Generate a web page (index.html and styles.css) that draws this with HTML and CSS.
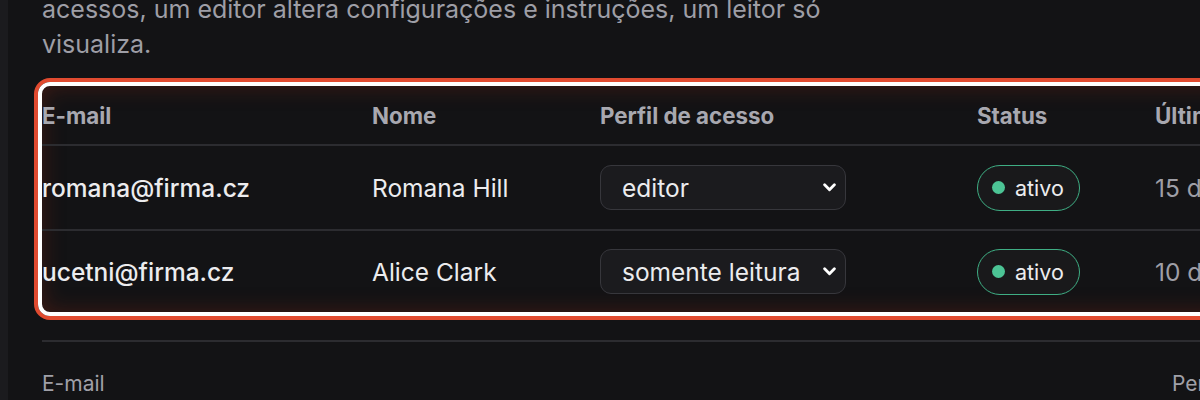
FILE: index.html
```html
<!DOCTYPE html>
<html lang="pt">
<head>
<meta charset="utf-8">
<link rel="stylesheet" href="styles.css">
</head>
<body>
<div class="layout">
  <aside class="rail"></aside>
  <main class="main">
    <p class="intro">acessos, um editor altera configurações e instruções, um leitor só visualiza.</p>
    <div class="highlight">
      <div class="table">
        <div class="row head">
          <div>E-mail</div><div>Nome</div><div>Perfil de acesso</div><div>Status</div><div>Último acesso</div>
        </div>
        <div class="row">
          <div class="email">romana@firma.cz</div>
          <div>Romana Hill</div>
          <div><div class="select"><span>editor</span><svg class="chev" viewBox="0 0 12 8"><path d="M1.5 1.5 6 6l4.5-4.5" fill="none" stroke="currentColor" stroke-width="2.6" stroke-linecap="round" stroke-linejoin="round"/></svg></div></div>
          <div><span class="badge"><span class="dot"></span>ativo</span></div>
          <div class="muted">15 dias atrás</div>
        </div>
        <div class="row">
          <div class="email">ucetni@firma.cz</div>
          <div>Alice Clark</div>
          <div><div class="select"><span>somente leitura</span><svg class="chev" viewBox="0 0 12 8"><path d="M1.5 1.5 6 6l4.5-4.5" fill="none" stroke="currentColor" stroke-width="2.6" stroke-linecap="round" stroke-linejoin="round"/></svg></div></div>
          <div><span class="badge"><span class="dot"></span>ativo</span></div>
          <div class="muted">10 dias atrás</div>
        </div>
      </div>
    </div>
    <div class="second">
      <div class="second-head"><div>E-mail</div><div>Perfil</div></div>
    </div>
  </main>
</div>
</body>
</html>
```

FILE: styles.css
```css
* { box-sizing: border-box; }
html, body { margin: 0; padding: 0; }
body {
  background: #131315;
  font-family: Inter, "Noto Sans", sans-serif;
  color: #ececee;
  overflow: hidden;
  width: 1200px;
  height: 400px;
}
.layout { display: flex; height: 400px; }
.rail { width: 8px; flex: none; background: #1b1b1e; }
.main { flex: none; width: 1320px; padding-left: 26px; }
.intro {
  margin: -8px 0 0 8px;
  width: 840px;
  font-size: 25px;
  line-height: 35px;
  color: #9e9ea6;
}
.highlight {
  margin-top: 16px;
  border: 4px solid #e14b30;
  border-radius: 16px;
}
.table {
  border: 4px solid #ffffff;
  border-radius: 12px;
  box-shadow: inset 0 0 22px rgba(150, 40, 20, 0.35);
  overflow: hidden;
}
.row {
  display: grid;
  grid-template-columns: 330px 228px 377px 178px 1fr;
  align-items: center;
  height: 85px;
  border-top: 2px solid #2c2c30;
  font-size: 24.5px;
}
.row.head {
  height: 58px;
  border-top: none;
  font-size: 22.3px;
  font-weight: 700;
  color: #a8a8b0;
}
.row:last-child { height: 83px; }
.email { font-weight: 500; }
.muted { color: #9e9ea6; }
.select {
  width: 246px;
  height: 45px;
  border: 1.5px solid #37373c;
  border-radius: 11px;
  background: #1b1b1e;
  display: flex;
  align-items: center;
  justify-content: space-between;
  padding: 0 9px 0 21px;
  color: #ececee;
}
.chev { width: 13px; height: 9px; color: #ffffff; }
.badge {
  display: inline-flex;
  align-items: center;
  gap: 10px;
  height: 46px;
  padding: 0 15px 0 14px;
  border: 1.5px solid #3fae84;
  border-radius: 23px;
  background: #19191b;
  font-size: 21.5px;
}
.dot { width: 13px; height: 13px; border-radius: 50%; background: #4cc495; }
.second {
  margin: 20px 0 0 8px;
  border-top: 2px solid #2c2c30;
}
.second-head {
  display: grid;
  grid-template-columns: 1130px 1fr;
  padding-top: 29px;
  font-size: 21px;
  color: #a0a0a8;
}
```
